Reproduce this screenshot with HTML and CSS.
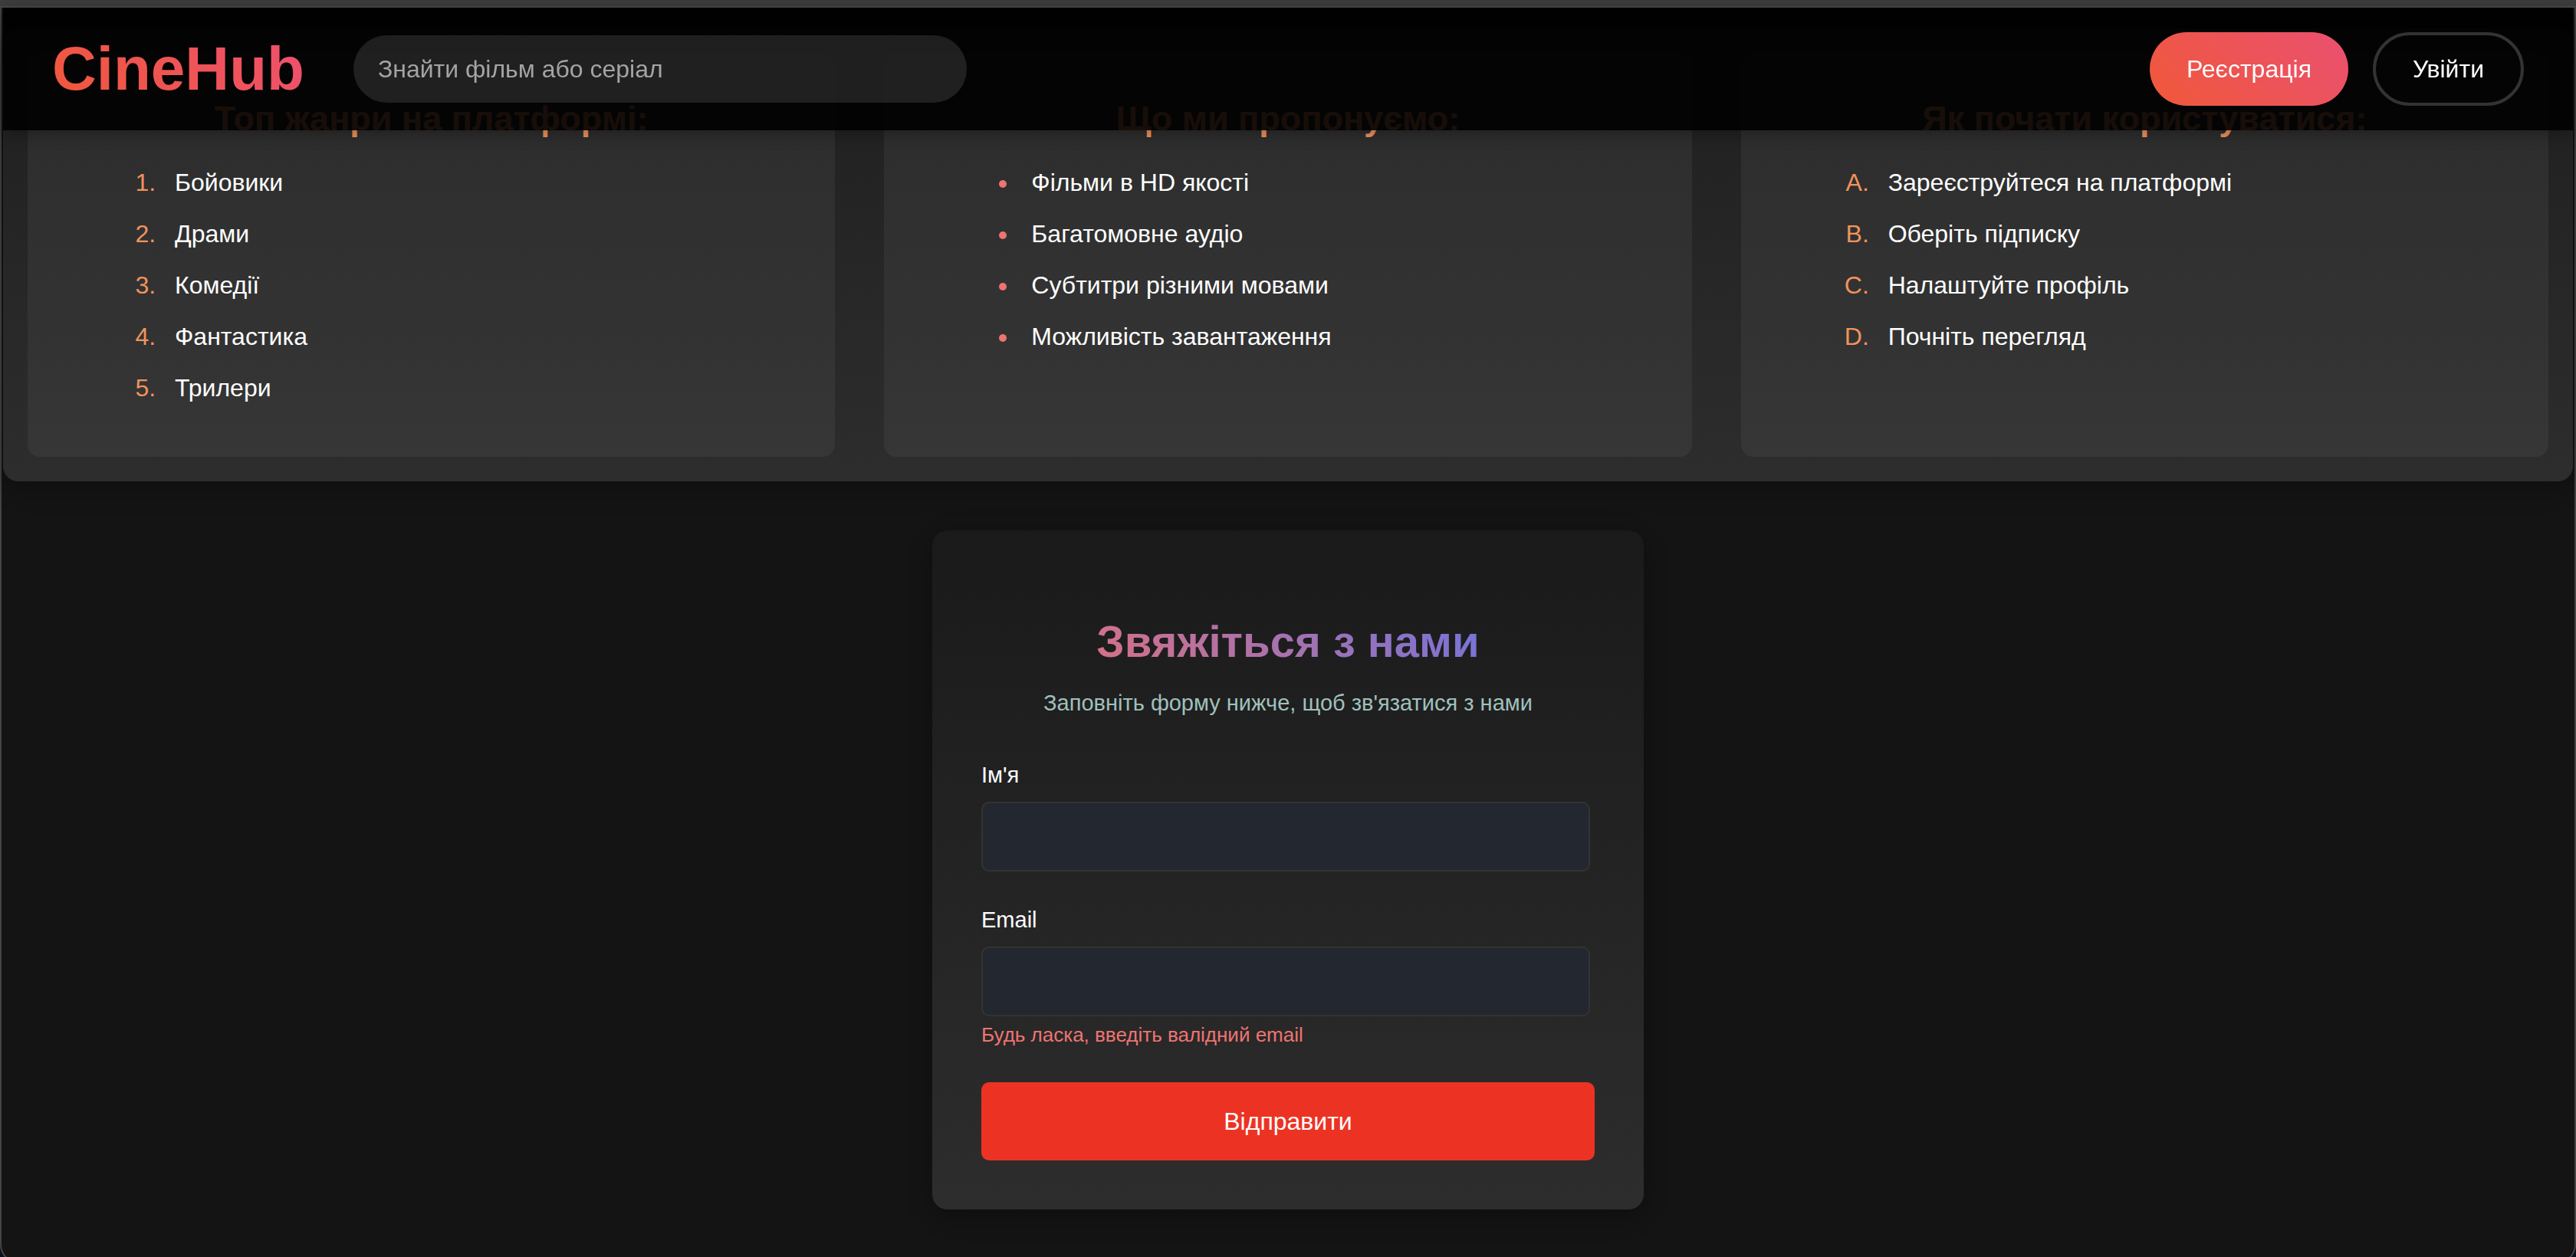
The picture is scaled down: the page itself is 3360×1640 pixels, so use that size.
FILE: index.html
```
<!DOCTYPE html>
<html lang="uk">
<head>
  <meta charset="utf-8">
  <title>CineHub</title>
  <link rel="stylesheet" href="styles.css">
</head>
<body>
  <div class="window">
    <header class="header">
      <a class="logo" href="#">CineHub</a>
      <input class="search" type="search" placeholder="Знайти фільм або серіал" aria-label="Знайти фільм або серіал">
      <div class="auth">
        <button class="btn btn-primary" type="button">Реєстрація</button>
        <button class="btn btn-outline" type="button">Увійти</button>
      </div>
    </header>

    <main>
      <section class="info">
        <article class="info-card">
          <h3>Топ жанри на платформі:</h3>
          <ol class="list list-numbers">
            <li>Бойовики</li>
            <li>Драми</li>
            <li>Комедії</li>
            <li>Фантастика</li>
            <li>Трилери</li>
          </ol>
        </article>
        <article class="info-card">
          <h3>Що ми пропонуємо:</h3>
          <ul class="list list-bullets">
            <li>Фільми в HD якості</li>
            <li>Багатомовне аудіо</li>
            <li>Субтитри різними мовами</li>
            <li>Можливість завантаження</li>
          </ul>
        </article>
        <article class="info-card">
          <h3>Як почати користуватися:</h3>
          <ol class="list list-letters">
            <li>Зареєструйтеся на платформі</li>
            <li>Оберіть підписку</li>
            <li>Налаштуйте профіль</li>
            <li>Почніть перегляд</li>
          </ol>
        </article>
      </section>

      <form class="contact">
        <h2>Звяжіться з нами</h2>
        <p class="lead">Заповніть форму нижче, щоб зв'язатися з нами</p>
        <div class="field">
          <label for="name">Ім'я</label>
          <input id="name" type="text">
        </div>
        <div class="field">
          <label for="email">Email</label>
          <input id="email" type="email" aria-describedby="email-error">
          <p class="error" id="email-error">Будь ласка, введіть валідний email</p>
        </div>
        <button class="submit" type="submit">Відправити</button>
      </form>
    </main>
  </div>
</body>
</html>
```
FILE: styles.css
```
* {
  box-sizing: border-box;
}

html {
  height: 100%;
  overflow: hidden;
  background: #07121c;
}

body {
  margin: 0;
  height: 100%;
  border-top: 8px solid #3d3d3d;
  color: #fff;
  font-family: "Liberation Sans", Arial, sans-serif;
  font-size: 32px;
  line-height: 51px;
}

.window {
  min-height: calc(100% + 8px);
  padding: 27px 2px 0;
  border: 2px solid #444;
  border-top-color: #4a4a4a;
  border-radius: 0 0 24px 24px;
  background: #141414;
}

h2,
h3,
p {
  margin: 0;
}

input,
button {
  font: inherit;
  color: inherit;
}

/* Header */
.header {
  position: fixed;
  z-index: 10;
  top: 10px;
  left: 4px;
  right: 4px;
  display: flex;
  align-items: center;
  gap: 64px;
  height: 160px;
  padding: 0 64px;
  background: rgba(0, 0, 0, 0.9);
  box-shadow: 0 4px 20px rgba(0, 0, 0, 0.3);
}

.logo {
  background: linear-gradient(45deg, #f0583a, #ee5070);
  background-clip: text;
  color: transparent;
  font-size: 80px;
  font-weight: 700;
  line-height: 92px;
  text-decoration: none;
}

.search {
  flex: 0 1 800px;
  height: 88px;
  padding: 0 32px;
  border: 0;
  border-radius: 50px;
  outline: 0;
  background: rgba(255, 255, 255, 0.11);
  appearance: none;
}

.search::placeholder {
  color: #a4a4a4;
}

.auth {
  display: flex;
  gap: 32px;
  margin-left: auto;
}

.btn {
  height: 96px;
  padding: 0 48px;
  border: 0;
  border-radius: 50px;
  background: none;
}

.btn-primary {
  background: linear-gradient(45deg, #f0583a, #ea5070);
}

.btn-outline {
  border: 4px solid #333;
}

/* Info cards */
.info {
  display: grid;
  grid-template-columns: repeat(3, 1fr);
  gap: 64px;
  padding: 32px;
  border-radius: 20px;
  background: linear-gradient(180deg, #1f1f1f, #2d2d2d);
  box-shadow: 0 8px 32px rgba(0, 0, 0, 0.3);
}

.info-card {
  padding: 48px;
  border-radius: 16px;
  background: rgba(255, 255, 255, 0.05);
}

.info-card h3 {
  margin-bottom: 20px;
  color: #f0935d;
  font-size: 45px;
  line-height: 76px;
  text-align: center;
}

.list {
  margin: 0;
  padding-left: 128px;
}

.list li {
  margin-bottom: 16px;
  padding-left: 16px;
}

.list li::marker {
  color: #f0935d;
}

.list-numbers {
  list-style: decimal;
}

.list-bullets {
  list-style: disc;
}

.list-bullets li::marker {
  color: #ee7471;
}

.list-letters {
  list-style: upper-alpha;
}

/* Contact form */
.contact {
  width: 928px;
  max-width: 100%;
  margin: 64px auto;
  padding: 96px 64px 64px;
  border-radius: 20px;
  background: linear-gradient(180deg, #1a1a1a, #2d2d2d);
  box-shadow: 0 8px 32px rgba(0, 0, 0, 0.3);
}

.contact h2 {
  margin-bottom: 8px;
  background: linear-gradient(45deg, #f4706c, #5674f4);
  background-clip: text;
  color: transparent;
  font-size: 58px;
  line-height: 98px;
  text-align: center;
}

.lead {
  margin-bottom: 48px;
  color: #a0c0bc;
  font-size: 29px;
  line-height: 46px;
  text-align: center;
}

.field {
  margin-bottom: 40px;
}

.field label {
  display: block;
  margin-bottom: 12px;
  font-size: 29px;
  line-height: 46px;
}

.field input {
  display: block;
  width: calc(100% - 6px);
  height: 91px;
  padding: 0 24px;
  border: 2px solid #333;
  border-radius: 10px;
  outline: 0;
  background: #23272f;
}

.error {
  margin-top: 2px;
  color: #ee7471;
  font-size: 26px;
  line-height: 44px;
}

.submit {
  display: block;
  width: 100%;
  height: 102px;
  border: 0;
  border-radius: 10px;
  background: #ec3323;
}
```
